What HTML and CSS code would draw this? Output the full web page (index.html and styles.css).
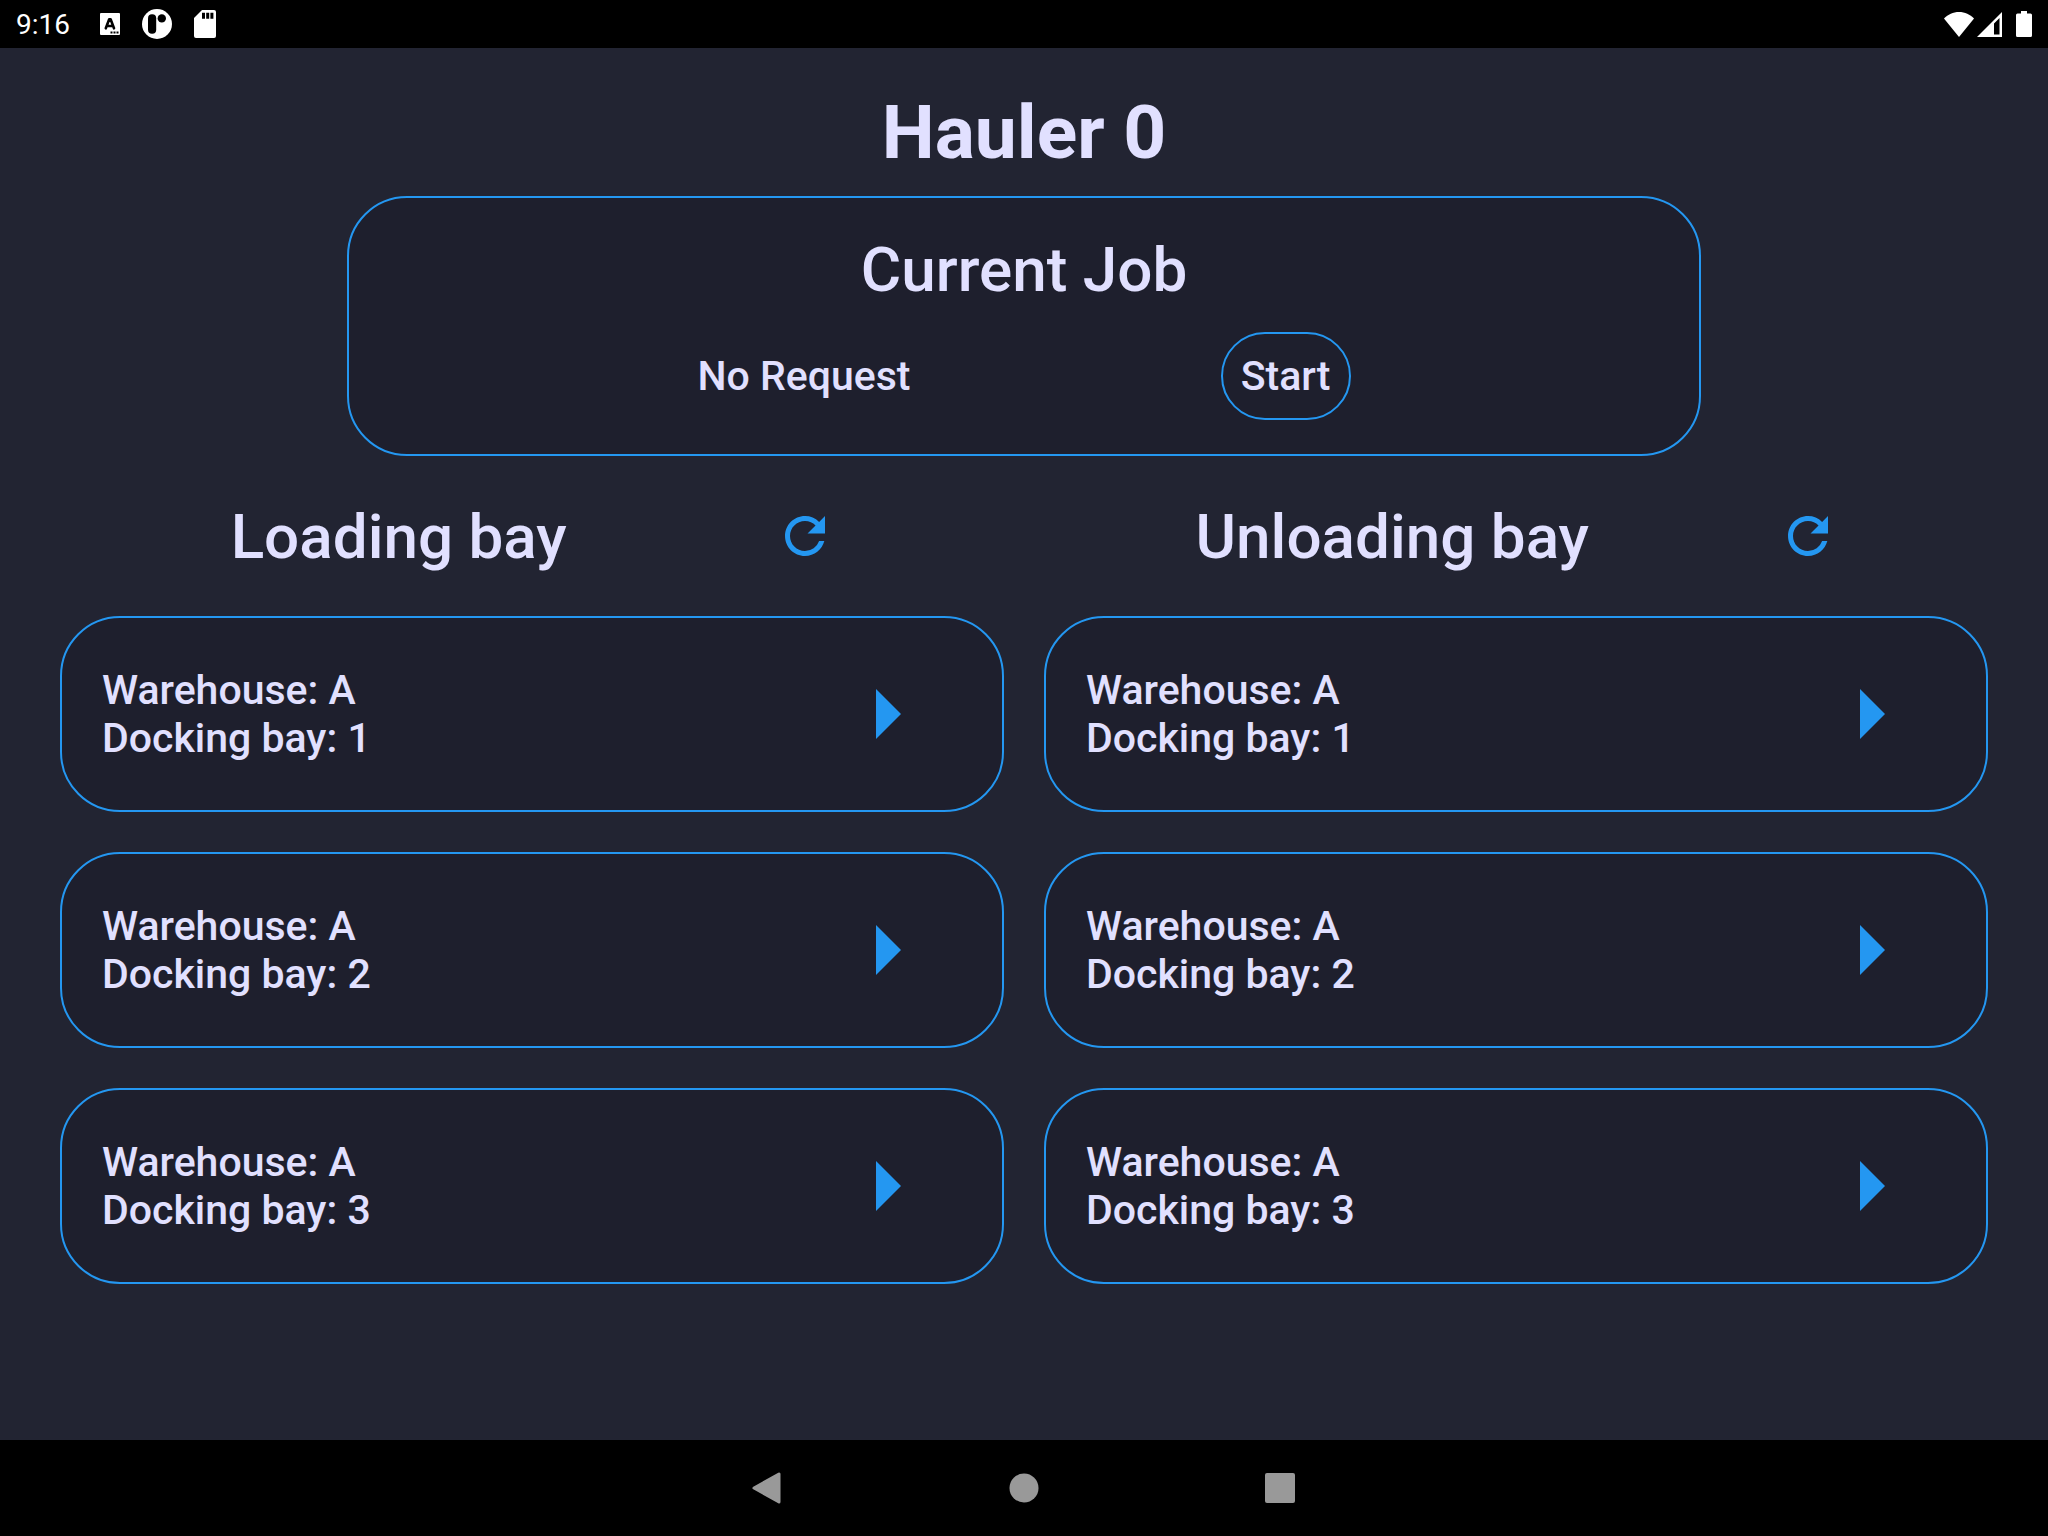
FILE: index.html
```html
<!DOCTYPE html>
<html lang="en">
<head>
  <meta charset="utf-8">
  <meta name="viewport" content="width=device-width, initial-scale=1">
  <title>Hauler 0</title>
  <link rel="stylesheet" href="styles.css">
</head>
<body>
  <svg class="sprite" aria-hidden="true">
    <symbol id="refresh" viewBox="0 0 24 24"><path d="M17.65 6.35A7.958 7.958 0 0 0 12 4c-4.42 0-7.99 3.58-7.99 8s3.57 8 7.99 8c3.73 0 6.84-2.55 7.73-6h-2.08A5.99 5.99 0 0 1 12 18c-3.31 0-6-2.69-6-6s2.69-6 6-6c1.66 0 3.14.69 4.22 1.78L13 11h7V4z"/></symbol>
    <symbol id="arrow" viewBox="0 0 24 24"><path d="M10 17l5-5-5-5z"/></symbol>
  </svg>

  <header class="status-bar">
    <div class="status-left">
      <time class="clock">9:16</time>
      <div class="notifications">
        <svg width="20" height="22" viewBox="0 0 20 22" aria-hidden="true">
          <rect width="20" height="22" rx="1" fill="#fff"/>
          <path d="M5.800 15.300 9.200 6.200h1.400l3.400 9.100M7 13h5.800" fill="none" stroke="#000" stroke-width="2.600" stroke-linecap="round" stroke-linejoin="round"/>
          <path d="M10.500 18.500h2v2h-2zM13.500 18.500h2v2h-2zM16.500 18.500h2v2h-2z"/>
        </svg>
        <svg width="30" height="30" viewBox="0 0 30 30" aria-hidden="true">
          <circle cx="15" cy="15" r="15" fill="#fff"/>
          <rect x="6" y="5.200" width="8.200" height="19.600" rx="4"/>
          <circle cx="19.800" cy="9.400" r="4.200"/>
        </svg>
        <svg width="22" height="28" viewBox="0 0 22 28" aria-hidden="true">
          <path d="M8 0h12a2 2 0 0 1 2 2v24a2 2 0 0 1-2 2H2a2 2 0 0 1-2-2V8z" fill="#fff"/>
          <path d="M8 2.700h3v6H8zM12.200 2.700h3v6h-3zM16.400 2.700h3v6h-3z"/>
        </svg>
      </div>
    </div>
    <div class="status-right">
      <svg width="30" height="25" viewBox="0 0 30 25" aria-hidden="true"><path d="M0 6.500C4 2.500 9 0 15 0s11 2.500 15 6.500L15 25z" fill="#fff"/></svg>
      <svg width="25" height="25" viewBox="0 0 25 25" aria-hidden="true"><path d="M25 0v25H0zM22.500 6 17 11.500v11h5.500z" fill="#fff" fill-rule="evenodd"/></svg>
      <svg class="battery" width="16" height="26" viewBox="0 0 16 26" aria-hidden="true"><path d="M5 0h6v2.500h3.500a1.500 1.500 0 0 1 1.500 1.500v20.500a1.500 1.500 0 0 1-1.500 1.500h-13A1.500 1.500 0 0 1 0 24.500V4a1.500 1.500 0 0 1 1.500-1.500H5z" fill="#fff"/></svg>
    </div>
  </header>

  <main class="screen">
    <h1 class="title">Hauler 0</h1>

    <section class="card job">
      <h2 class="heading">Current Job</h2>
      <div class="job-row">
        <p class="body-text">No Request</p>
        <button class="start body-text" type="button">Start</button>
      </div>
    </section>

    <div class="bays">
      <section class="bay">
        <div class="bay-header">
          <h2 class="heading">Loading bay</h2>
          <button class="icon-button" type="button" aria-label="Refresh loading bay"><svg class="refresh-icon"><use href="#refresh"/></svg></button>
        </div>
        <ul class="bay-list">
          <li class="card dock"><p class="body-text">Warehouse: A<br>Docking bay: 1</p><button class="icon-button" type="button" aria-label="Select bay 1"><svg class="arrow-icon"><use href="#arrow"/></svg></button></li>
          <li class="card dock"><p class="body-text">Warehouse: A<br>Docking bay: 2</p><button class="icon-button" type="button" aria-label="Select bay 2"><svg class="arrow-icon"><use href="#arrow"/></svg></button></li>
          <li class="card dock"><p class="body-text">Warehouse: A<br>Docking bay: 3</p><button class="icon-button" type="button" aria-label="Select bay 3"><svg class="arrow-icon"><use href="#arrow"/></svg></button></li>
        </ul>
      </section>

      <section class="bay">
        <div class="bay-header">
          <h2 class="heading">Unloading bay</h2>
          <button class="icon-button" type="button" aria-label="Refresh unloading bay"><svg class="refresh-icon"><use href="#refresh"/></svg></button>
        </div>
        <ul class="bay-list">
          <li class="card dock"><p class="body-text">Warehouse: A<br>Docking bay: 1</p><button class="icon-button" type="button" aria-label="Select bay 1"><svg class="arrow-icon"><use href="#arrow"/></svg></button></li>
          <li class="card dock"><p class="body-text">Warehouse: A<br>Docking bay: 2</p><button class="icon-button" type="button" aria-label="Select bay 2"><svg class="arrow-icon"><use href="#arrow"/></svg></button></li>
          <li class="card dock"><p class="body-text">Warehouse: A<br>Docking bay: 3</p><button class="icon-button" type="button" aria-label="Select bay 3"><svg class="arrow-icon"><use href="#arrow"/></svg></button></li>
        </ul>
      </section>
    </div>
  </main>

  <nav class="nav-bar" aria-label="System">
    <button class="nav-button" type="button" aria-label="Back"><svg width="32" height="32" viewBox="0 0 32 32"><path d="M27 2v28L2 16z" stroke-width="3" stroke-linejoin="round"/></svg></button>
    <button class="nav-button" type="button" aria-label="Home"><svg width="32" height="32" viewBox="0 0 32 32"><circle cx="16" cy="16" r="14.500" stroke="none"/></svg></button>
    <button class="nav-button" type="button" aria-label="Overview"><svg width="32" height="32" viewBox="0 0 32 32"><rect x="1" y="1" width="30" height="30" rx="2" stroke="none"/></svg></button>
  </nav>
</body>
</html>
```

FILE: styles.css
```css
:root {
  --background: #222432;
  --surface: #1e1f2d;
  --accent: #2497f1;
  --text: #e1e0ff;
}

* {
  box-sizing: border-box;
  margin: 0;
  padding: 0;
}

body {
  display: flex;
  flex-direction: column;
  min-height: 100vh;
  background: var(--background);
  color: var(--text);
  font-family: Roboto, "Liberation Sans", sans-serif;
}

button {
  border: 0;
  background: none;
  color: inherit;
  font: inherit;
  cursor: pointer;
}

svg {
  display: block;
}

.sprite {
  position: absolute;
  width: 0;
  height: 0;
}

.status-bar {
  display: flex;
  align-items: center;
  justify-content: space-between;
  height: 48px;
  padding: 0 16px;
  background: #000;
  color: #fff;
}

.status-left {
  display: flex;
  align-items: center;
  gap: 30px;
}

.clock {
  font-size: 28px;
  line-height: 32px;
  padding-top: 2px;
}

.notifications {
  display: flex;
  align-items: center;
  gap: 22px;
}

.status-right {
  display: flex;
  align-items: center;
  gap: 3px;
}

.battery {
  margin-left: 11px;
}

.screen {
  flex: 1;
  display: flex;
  flex-direction: column;
  padding: 40px 60px;
}

.title {
  margin-bottom: 20px;
  font-size: 75px;
  font-weight: 700;
  line-height: 88px;
  text-align: center;
}

.heading {
  padding-top: 2px;
  font-size: 62px;
  font-weight: 500;
  line-height: 72px;
}

.body-text {
  font-size: 41px;
  font-weight: 500;
  line-height: 48px;
}

.card {
  border: 2px solid var(--accent);
  border-radius: 60px;
  background: var(--surface);
}

.job {
  display: flex;
  flex-direction: column;
  gap: 26px;
  align-self: center;
  width: calc(70% + 4px);
  padding: 34px 38px;
  text-align: center;
}

.job-row {
  display: flex;
  align-items: center;
  justify-content: space-evenly;
}

.start {
  padding: 18px;
  border: 2px solid var(--accent);
  border-radius: 44px;
}

.bays {
  display: grid;
  grid-template-columns: 1fr 1fr;
  gap: 40px;
}

.bay-header {
  display: flex;
  align-items: center;
  justify-content: space-evenly;
  height: 160px;
  margin: 0 -40px 0 -20px;
}

.icon-button {
  fill: var(--accent);
}

.refresh-icon {
  width: 60px;
  height: 60px;
  margin: 18px;
}

.arrow-icon {
  width: 120px;
  height: 120px;
}

.bay-list {
  display: flex;
  flex-direction: column;
  gap: 40px;
  list-style: none;
}

.dock {
  display: flex;
  align-items: center;
  justify-content: space-between;
  padding: 36px 56px 36px 40px;
}

.nav-bar {
  display: flex;
  align-items: center;
  justify-content: center;
  gap: 160px;
  height: 96px;
  background: #000;
}

.nav-button {
  display: grid;
  place-items: center;
  width: 96px;
  height: 96px;
  fill: #999;
  stroke: #999;
}
```
